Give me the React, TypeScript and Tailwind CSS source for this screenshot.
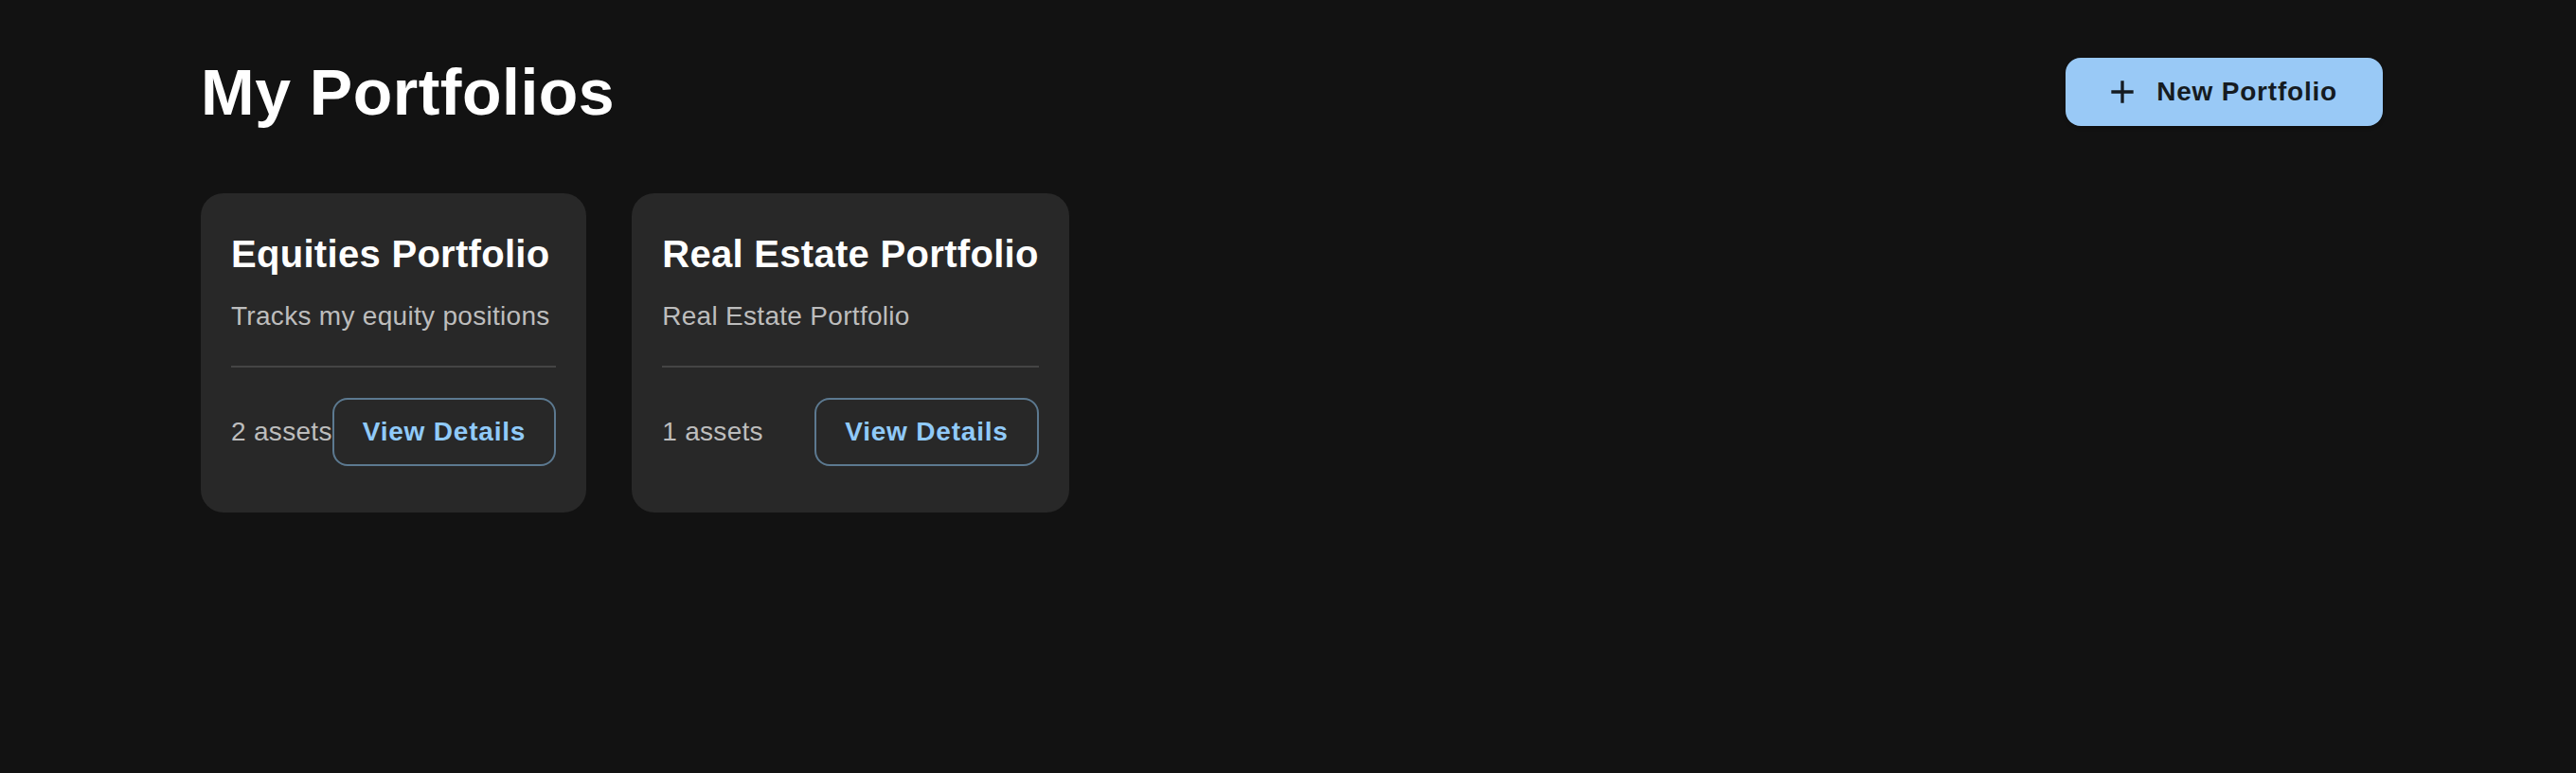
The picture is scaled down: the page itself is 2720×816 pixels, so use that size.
const PORTFOLIOS = [
  { id: 1, name: 'Equities Portfolio', description: 'Tracks my equity positions', assets: 2 },
  { id: 2, name: 'Real Estate Portfolio', description: 'Real Estate Portfolio', assets: 1 },
];

function AddIcon() {
  return (
    <svg width="40" height="40" viewBox="0 0 24 24" fill="currentColor" className="mr-4 -ml-2 shrink-0">
      <path d="M19 13h-6v6h-2v-6H5v-2h6V5h2v6h6z" />
    </svg>
  );
}

function PortfolioCard({ name, description, assets }: { name: string; description: string; assets: number }) {
  return (
    <div className="w-fit rounded-[24px] bg-[#282828] px-8 pt-8 pb-[49px]">
      <h2 className="mb-[14px] text-[40px] leading-[64px] font-bold tracking-[0.3px] text-white whitespace-nowrap">
        {name}
      </h2>
      <p className="text-[28px] leading-[40px] tracking-[0.3px] text-[#bdbdbd] whitespace-nowrap">{description}</p>
      <div className="my-8 h-[2px] bg-[#444444]" />
      <div className="flex items-center justify-between">
        <span className="text-[28px] leading-[40px] tracking-[0.3px] text-[#bdbdbd] whitespace-nowrap">
          {assets} assets
        </span>
        <button className="flex h-[72px] items-center rounded-[16px] border-2 border-[#5c7990] px-[30px] text-[28px] font-bold tracking-[0.8px] text-[#90caf9] whitespace-nowrap">
          View Details
        </button>
      </div>
    </div>
  );
}

export default function App() {
  return (
    <div className="min-h-screen w-full bg-[#121212] font-['Liberation_Sans',Arial,sans-serif]">
      <div className="pt-[55px] pl-[212px] pr-[204px]">
        <div className="mb-[65px] flex h-[84px] items-center justify-between">
          <h1 className="text-[68px] leading-[84px] font-bold tracking-[0.5px] text-white">My Portfolios</h1>
          <button className="flex h-[72px] items-center rounded-[16px] bg-[#99c9f6] pl-12 pr-12 text-[28px] font-bold tracking-[0.8px] text-[#151b21] shadow-[0_3px_2px_-2px_rgba(0,0,0,0.2),0_2px_4px_0_rgba(0,0,0,0.14)]">
            <AddIcon />
            New Portfolio
          </button>
        </div>
        <div className="flex items-start gap-12">
          {PORTFOLIOS.map(p => (
            <PortfolioCard key={p.id} name={p.name} description={p.description} assets={p.assets} />
          ))}
        </div>
      </div>
    </div>
  );
}
